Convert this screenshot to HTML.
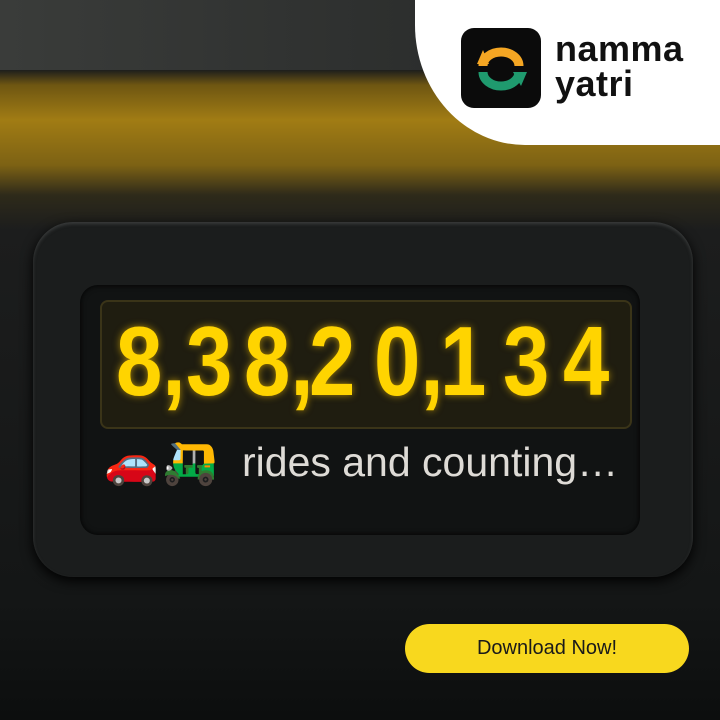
<!DOCTYPE html>
<html><head><style>
body{margin:0;width:720px;height:720px;overflow:hidden;position:relative;font-family:"Liberation Sans",sans-serif;
background:linear-gradient(180deg,#2a2c2b 0px,#3a3b36 40px,#1d1e1c 70px,#6e5612 85px,#a17c14 120px,#7d6214 165px,#2e2a1a 195px,#1c1d1d 230px,#141616 600px,#0c0e0e 720px);}
.wind{position:absolute;left:0;top:0;width:720px;height:70px;background:linear-gradient(90deg,#3a3c3a,#2c2e2d 60%,#3a3a36)}
.corner{position:absolute;left:415px;top:-20px;width:340px;height:165px;background:#fff;border-bottom-left-radius:110px 120px}
.icon{position:absolute;left:461px;top:28px;width:80px;height:80px;background:#0b0b0b;border-radius:13px}
.brand{position:absolute;left:555px;top:31px;font-size:36px;font-weight:bold;line-height:35px;color:#111;letter-spacing:0.5px}
.outer{position:absolute;left:33px;top:222px;width:660px;height:355px;border-radius:40px;background:#1b1d1d;box-shadow:inset 0 2px 3px #3a3c3c,0 4px 12px #000}
.inner{position:absolute;left:80px;top:285px;width:560px;height:250px;border-radius:18px;background:#111313;box-shadow:inset 0 0 6px #000}
.disp{position:absolute;left:100px;top:300px;width:528px;height:125px;border-radius:8px;background:#1f1d10;border:2px solid #3a3418}
.d{position:absolute;top:306px;font-size:98px;font-weight:bold;color:#ffd400;text-shadow:0 0 8px rgba(255,200,0,.6);font-family:"Liberation Sans Narrow","Liberation Sans",sans-serif;transform:scaleX(.85);transform-origin:left top;line-height:110px}
.txt{position:absolute;left:242px;top:438px;font-size:41px;color:#dedbd6;line-height:48px}
.btn{position:absolute;left:405px;top:624px;width:284px;height:49px;border-radius:25px;background:#f8d81e;color:#1a1a1a;font-size:20px;text-align:center;line-height:49px}
</style></head><body>
<div class="wind"></div>
<div class="corner"></div>
<div class="icon"><svg width="80" height="80" viewBox="0 0 80 80">
<path d="M22 38 A18 14 0 0 1 58 38" fill="none" stroke="#f5a623" stroke-width="9"/>
<path d="M14 36 L26 36 L20 22 Z" fill="#f5a623" transform="translate(2,0)"/>
<path d="M22 44 A18 14 0 0 0 58 44" fill="none" stroke="#1f9a6e" stroke-width="9"/>
<path d="M52 44 L66 44 L60 58 Z" fill="#1f9a6e"/>
</svg></div>
<div class="brand">namma<br>yatri</div>
<div class="outer"></div>
<div class="inner"></div>
<div class="disp"></div>
<div class="d" style="left:116px">8,</div>
<div class="d" style="left:186px">3</div>
<div class="d" style="left:244px">8,</div>
<div class="d" style="left:309px">2</div>
<div class="d" style="left:374px">0,</div>
<div class="d" style="left:440px">1</div>
<div class="d" style="left:503px">3</div>
<div class="d" style="left:563px">4</div>
<div style="position:absolute;left:104px;top:436px;font-size:44px;line-height:54px;letter-spacing:4px">🚗🛺</div>
<div class="txt">rides and counting…</div>
<div class="btn">Download Now!</div>
</body></html>
